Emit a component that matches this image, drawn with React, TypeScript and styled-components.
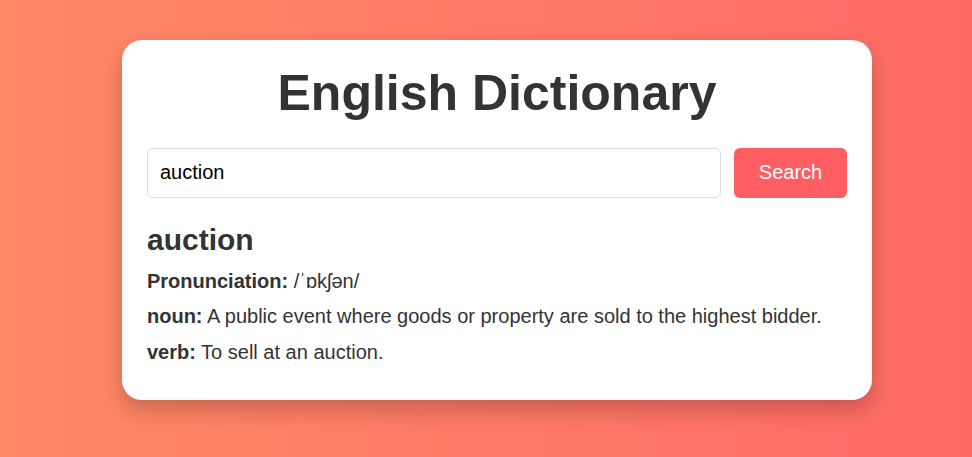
import React, { useState } from "react";
import styled, { createGlobalStyle } from "styled-components";

const GlobalStyle = createGlobalStyle`
  html, body { margin: 0; padding: 0; }
  body {
    font-family: "Liberation Sans", Arial, sans-serif;
    background: linear-gradient(to right, #ff8a66, #ff6a66);
    min-height: 457px;
  }
  * { box-sizing: border-box; }
`;

const Page = styled.div`
  display: flex;
  justify-content: center;
  padding: 40px 0 0 22px;
  min-height: 457px;
`;

const Card = styled.div`
  width: 750px;
  height: 360px;
  background: #fff;
  border-radius: 20px;
  padding: 25px;
  box-shadow: 0 10px 22px rgba(0, 0, 0, 0.22);
  color: #333;
`;

const Title = styled.h1`
  margin: 0 0 25px;
  text-align: center;
  font-size: 50px;
  font-weight: bold;
  line-height: 57.5px;
  color: #333;
`;

const SearchRow = styled.div`
  display: flex;
  gap: 13px;
`;

const Input = styled.input`
  flex: 1;
  height: 50px;
  border: 1px solid #ddd;
  border-radius: 6px;
  padding: 0 12px;
  font-family: "Liberation Sans", Arial, sans-serif;
  font-size: 20px;
  color: #000;
  outline: none;
`;

const Button = styled.button`
  width: 113px;
  height: 50px;
  border: none;
  border-radius: 6px;
  background: #ff5e62;
  color: #fff;
  font-family: "Liberation Sans", Arial, sans-serif;
  font-size: 20px;
  cursor: pointer;
`;

const Result = styled.div`
  margin-top: 25px;
`;

const Word = styled.h2`
  margin: 0 0 12.5px;
  font-size: 30px;
  line-height: 34.5px;
  font-weight: bold;
  color: #333;
`;

const Line = styled.p`
  margin: 0 0 12.5px;
  font-size: 20px;
  line-height: 23px;
  color: #333;
`;

const Label = styled.strong`
  font-weight: bold;
`;

export default function App() {
  const [q, setQ] = useState("auction");
  return (
    <>
      <GlobalStyle />
      <Page>
        <Card>
          <Title>English Dictionary</Title>
          <SearchRow>
            <Input value={q} onChange={(e) => setQ(e.target.value)} />
            <Button>Search</Button>
          </SearchRow>
          <Result>
            <Word>auction</Word>
            <Line>
              <Label>Pronunciation:</Label> /ˈɒkʃən/
            </Line>
            <Line>
              <Label>noun:</Label> A public event where goods or property are sold to the highest bidder.
            </Line>
            <Line>
              <Label>verb:</Label> To sell at an auction.
            </Line>
          </Result>
        </Card>
      </Page>
    </>
  );
}
